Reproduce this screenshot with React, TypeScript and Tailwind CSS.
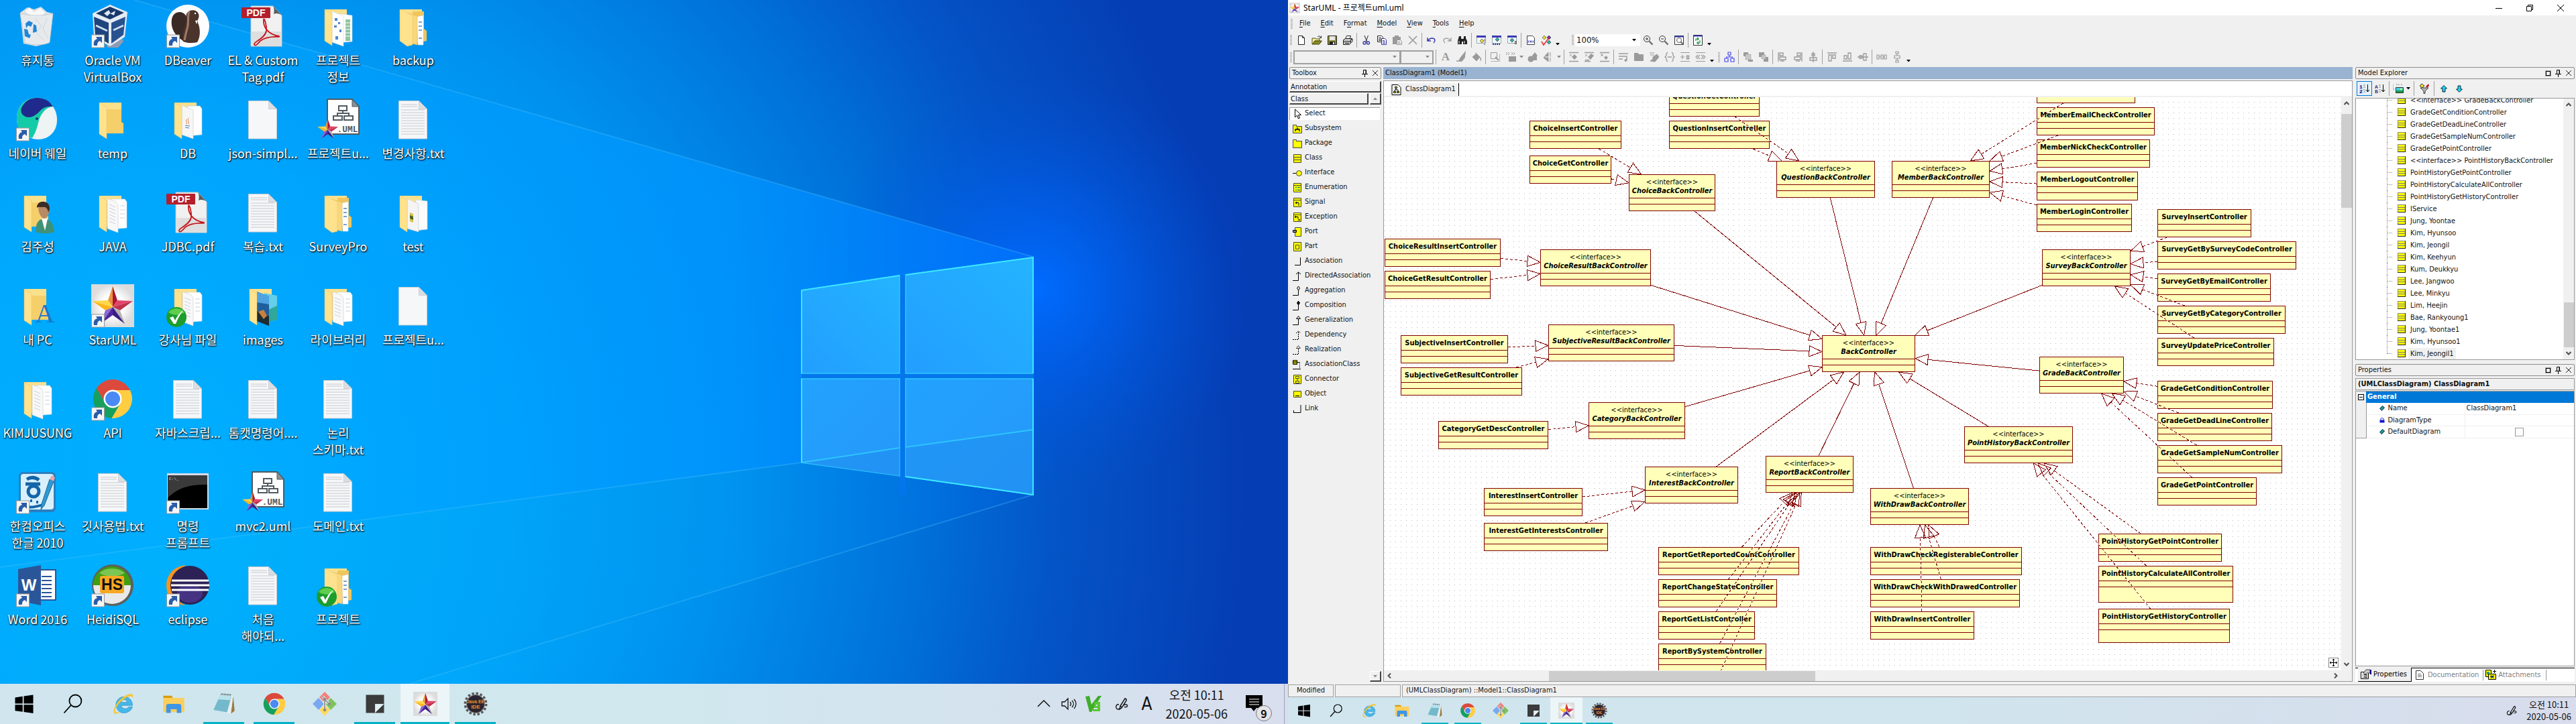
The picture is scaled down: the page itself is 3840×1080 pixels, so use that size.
import React, { ReactNode } from "react";

/* ------------------------------------------------------------------ */
/* Desktop icons (64 x 64)                                            */
/* ------------------------------------------------------------------ */

function Svg64({ children, className = "size-16" }: { children: ReactNode; className?: string }) {
  return (
    <svg viewBox="0 0 64 64" className={`overflow-visible ${className}`} aria-hidden="true">
      {children}
    </svg>
  );
}

function ShortcutMark() {
  return (
    <g>
      <rect x="0.5" y="45" width="19" height="19" fill="#f6f6f6" stroke="#9a9a9a" />
      <path d="M4 61c-1-6 1-9 5-10l-2-3h9v9l-3-3c-3 1-4 3-4 7z" fill="#2b5ca8" />
    </g>
  );
}

function CheckMark() {
  return (
    <g>
      <circle cx="15" cy="49" r="15" fill="#1c9d2c" />
      <path d="M3 42a15 15 0 0 1 24 0c-8 5-16 5-24 0z" fill="#5fce4c" />
      <path d="M5 50l5-2 3 6c3-6 6-11 12-15-5 6-8 13-11 20h-3z" fill="#fff" />
    </g>
  );
}

function StarShape() {
  return (
    <g>
      <path d="M32 3L25 24 32 34z" fill="#e8963c" />
      <path d="M32 3l7 21-7 10z" fill="#b01434" />
      <path d="M62 25L39 24 32 34z" fill="#e24468" />
      <path d="M62 25L43 39 32 34z" fill="#c0304c" />
      <path d="M50 59l-7-20-11-5z" fill="#b4b4b4" />
      <path d="M50 59L32 46V34z" fill="#3c1c82" />
      <path d="M14 59l18-13V34z" fill="#4e2aa0" />
      <path d="M14 59l7-20 11-5z" fill="#8c68d2" />
      <path d="M2 25l19 14 11-5z" fill="#ffb51c" />
      <path d="M2 25l23-1 7 10z" fill="#ffd84a" />
    </g>
  );
}

function StarTile() {
  return (
    <>
      <defs>
        <radialGradient id="starTile">
          <stop offset="0.5" stopColor="#fff" />
          <stop offset="1" stopColor="#dcdcdc" />
        </radialGradient>
      </defs>
      <rect width="64" height="64" fill="url(#starTile)" />
      <StarShape />
    </>
  );
}

function ChromeShape() {
  return (
    <g transform="translate(32 32)">
      <path d="M-24.2-15.9L-11.3 6.5 0-13H25.9A29 29 0 0 0-24.2-15.9z" fill="#dc4a3d" />
      <path d="M25.9-13H0L11.3 6.5-1.7 28.9A29 29 0 0 0 25.9-13z" fill="#ffcd42" />
      <path d="M-1.7 28.9L11.3 6.5H-11.3L-24.2-15.9A29 29 0 0 0-1.7 28.9z" fill="#17a05d" />
      <circle r="13.5" fill="#fff" />
      <circle r="11" fill="#4a8af4" />
    </g>
  );
}

function FolderBack() {
  return (
    <>
      <path d="M12 7h33v29l3 2v15H12z" fill="#f5cf6a" />
      <path d="M12 7h33v10H20z" fill="#fbe08c" />
    </>
  );
}

function FolderFlap({ wide = false }: { wide?: boolean }) {
  return <path d={wide ? "M12 7l19 9v44l-8 2-11-8z" : "M12 7l11 7v47l-11-7z"} fill="#ffe28e" stroke="#e9c15f" strokeWidth="0.5" />;
}

function FolderIcon({ kind = "empty" }: { kind?: "empty" | "docs" | "nested" | "images" | "sheet" | "java" | "jar" }) {
  return (
    <g>
      <FolderBack />
      {kind === "docs" && (
        <>
          <path d="M30 12h20l3 4v39l-23 2z" fill="#fff" stroke="#c5d6e4" strokeWidth="0.6" />
          <path d="M24 11l13 5 3 5v41l-16-6z" fill="#f8f8f8" stroke="#c9c9c9" strokeWidth="0.6" />
          <path d="M27 20l9 4M27 25l9 4M27 30l9 4M27 35l9 4M27 40l9 4M27 45l9 4M43 22h7M43 28h7M43 34h7M43 40h7" stroke="#c3ccd4" strokeWidth="0.9" />
        </>
      )}
      {kind === "java" && (
        <>
          <path d="M32 12h18l3 4v39l-21 2z" fill="#fff" stroke="#9fc6e6" strokeWidth="0.6" />
          <path d="M23 11l17 7v43l-17-6z" fill="#f6f6f6" stroke="#ccc" strokeWidth="0.6" />
          <path d="M30 32c-2 3 2 4 0 7M33 30c-2 4 1 5 0 9" stroke="#e07a3c" fill="none" />
          <path d="M28 41l7 1M28 44l6 1" stroke="#4a76a8" />
        </>
      )}
      {kind === "jar" && (
        <>
          <path d="M36 13l17 2v42l-17 2z" fill="#fbfbfb" stroke="#d0d0d0" strokeWidth="0.6" />
          <path d="M23 11l17 8v42l-17-5z" fill="#f4f4f4" stroke="#c8c8c8" strokeWidth="0.6" />
          <path d="M27 32l5 2v13l-5-2z" fill="#d6c24a" />
          <path d="M27 36l5 2v5l-5-2z" fill="#47662a" />
        </>
      )}
      {kind === "sheet" && (
        <>
          <path d="M31 13l22 3v39l-22 2z" fill="#fff" stroke="#bcd" strokeWidth="0.6" />
          <path d="M43 22h7v32h-7z" fill="#8fc59f" />
          <path d="M43 27h7M43 32h7M43 37h7M43 42h7M43 47h7" stroke="#fff" />
          <path d="M23 10l17 7v45l-17-6z" fill="#fff" stroke="#cdd6df" strokeWidth="0.6" />
          <path d="M27 20h4v4h-4zM32 26h3v3h-3zM26 31h4v3h-4zM34 37h3v4h-3zM28 47h4v5h-4z" fill="#4c86cc" />
        </>
      )}
      {kind === "images" && (
        <>
          <path d="M34 13l19 4v36l-19 4z" fill="#64cfe8" />
          <path d="M36 40l17-8v21l-17 4z" fill="#2fa79a" />
          <path d="M23 11l18 7v44l-18-7z" fill="#1f5f9e" />
          <path d="M23 11l18 7v12l-18-3z" fill="#4fa3e0" />
          <path d="M23 40l18 8v14l-18-7z" fill="#1d2c33" />
          <path d="M25 41l8-3 5 9-5 5z" fill="#c9803c" />
        </>
      )}
      {kind === "nested" && (
        <>
          <path d="M31 10h17v26l4 3v15l-21 4z" fill="#f0c65c" />
          <path d="M37 18l10-2v44h-8z" fill="#fff" stroke="#cdd6df" strokeWidth="0.6" />
          <path d="M40 26h5M40 32h5M40 38h5M40 50h5" stroke="#4c86cc" strokeWidth="1.6" />
          <path d="M23 12l15 5v43l-15-4z" fill="#f9d77c" stroke="#e3bb57" strokeWidth="0.6" />
        </>
      )}
      <FolderFlap wide={kind === "nested"} />
    </g>
  );
}

function PageIcon({ lined = false }: { lined?: boolean }) {
  return (
    <g>
      <path d="M10.500 4.500h30l12 12v44.500h-42z" fill="#f6f7f9" stroke="#c7ccd1" />
      <path d="M40.500 4.500v12h12z" fill="#dadde1" stroke="#bfc4c9" strokeWidth="0.7" />
      {lined && (
        <path d="M14 10h24M14 13h24M14 18h35M14 22h35M14 26h35M14 30h35M14 34h35M14 38h35M14 42h35M14 46h35M14 50h35M14 54h35" stroke="#c6c9cc" strokeWidth="1" />
      )}
    </g>
  );
}

function PdfIcon() {
  return (
    <g>
      <path d="M14 2h33l13 14v46H14z" fill="#f1f1f1" stroke="#c5c5c5" />
      <path d="M14 40h46v22H14z" fill="#dedede" />
      <path d="M47 2l13 14c-3-3-9-4-12-2 1-4 1-9-1-12z" fill="#5c5c5c" />
      <path d="M33 22c-1 10 5 22 23 25 2 3-14-3-28 7-4 5-8 9-9 5s16-8 18-20c1-8-3-20-4-17z" fill="none" stroke="#c4161c" strokeWidth="1.8" />
      <rect y="4" width="43" height="16" rx="1" fill="#b3202c" />
      <text x="21.500" y="17" textAnchor="middle" fontSize="14" fontWeight="700" fill="#fff" fontFamily="Liberation Sans">
        PDF
      </text>
    </g>
  );
}

function UmlIcon() {
  return (
    <g>
      <path d="M16 2h37l10 11v41H16z" fill="#fff" stroke="#505a60" strokeWidth="2" />
      <path d="M53 2v11h10z" fill="#8a9196" stroke="#505a60" strokeWidth="1" />
      <g fill="none" stroke="#505a60" strokeWidth="2">
        <path d="M33 12h12v7H33zM25 27h13v6H25zM41 27h13v6H41zM39 19v4M31 27v-4h17v4" />
      </g>
      <text x="46" y="51" textAnchor="middle" fontSize="13" fontWeight="700" fill="#505a60" fontFamily="Liberation Mono">
        .UML
      </text>
      <g transform="translate(0 30) scale(0.52)">
        <StarShape />
      </g>
    </g>
  );
}

const desktopArt: Record<string, ReactNode> = {
  bin: (
    <g>
      <path d="M6 12l11-8 10 3 10-4 9 8 9 2-5 44-20 5-19-4z" fill="#dfe3e6" />
      <path d="M12 10l8-6 7 6 9-6 8 8-6 6-14 1z" fill="#f8f8f8" stroke="#c2c8cc" strokeWidth="0.7" />
      <path d="M6 13c14 4 34 4 49 0l-5 43c-8 5-28 5-37 1z" fill="#e9edf0" fillOpacity="0.7" stroke="#b7c4cd" strokeWidth="0.8" />
      <path d="M28 20l10 12-8 10 12 12M46 20l-6 16 8 14" stroke="#cfd4d8" fill="none" />
      <path d="M14 28l5-4 6 3-3 6-4-2-3 4zM26 29l4 2 1 9-6 2zM12 36l5 1 2 7 3 1-2 5-7-3z" fill="#1f86d8" />
    </g>
  ),
  vbox: (
    <g>
      <path d="M22 56c8-5 16-4 22-9l4 8-8 9H24z" fill="#8f9bb5" />
      <path d="M28 0l26 11-4 37-22 14L4 49 2 13z" fill="#e6ebf4" />
      <path d="M28 3l21 9-21 10L7 13z" fill="#17396b" />
      <path d="M19 13l7-5 3 5 7-4-2 7-6-3-4 4z" fill="#dfe7f3" />
      <path d="M4 18l22 9v31L6 46z" fill="#1d447c" />
      <path d="M30 27l21-9-3 27-18 13z" fill="#27528e" />
      <path d="M7 31l17 8M33 38l15-7" stroke="#cfdcef" strokeWidth="3" />
      <ShortcutMark />
    </g>
  ),
  dbeaver: (
    <g>
      <circle cx="32" cy="32" r="32" fill="#fdfdfd" />
      <path d="M8 22c2-14 18-14 22-4 2 10-4 20-5 36C12 46 6 34 8 22z" fill="#3a2a25" />
      <path d="M30 14c4-8 16-7 18 0 2 5-2 7-1 13 4 9 4 21-1 29-8 2-16 1-21-1-2-9 0-18 4-25 2-6-1-10 1-16z" fill="#4b342c" />
      <path d="M34 10c-3 8 0 16-3 26-2 6-3 12-4 17" stroke="#a07a68" strokeWidth="3" fill="none" />
      <circle cx="43" cy="13" r="1.200" fill="#fff" />
      <path d="M43 24l4-1-2 6z" fill="#fff" />
      <ShortcutMark />
    </g>
  ),
  pdf: <PdfIcon />,
  folderSheet: <FolderIcon kind="sheet" />,
  folderNested: <FolderIcon kind="nested" />,
  folder: <FolderIcon />,
  folderDocs: <FolderIcon kind="docs" />,
  folderJava: <FolderIcon kind="java" />,
  folderJar: <FolderIcon kind="jar" />,
  folderImages: <FolderIcon kind="images" />,
  folderDocsOk: (
    <g>
      <FolderIcon kind="docs" />
      <CheckMark />
    </g>
  ),
  folderNestedOk: (
    <g>
      <FolderIcon kind="nested" />
      <CheckMark />
    </g>
  ),
  page: <PageIcon />,
  text: <PageIcon lined />,
  uml: <UmlIcon />,
  whale: (
    <g>
      <path d="M31 0c14 0 22 10 24 13 4 6 6 12 6 20 0 18-13 29-28 29S1 50 1 31C1 13 13 0 31 0z" fill="#eef3f3" />
      <path d="M31 0c12 0 19 6 24 13-12 1-19 12-22 24-2 10-6 18-9 23C9 57 1 45 1 31 1 13 13 0 31 0z" fill="#14cba8" />
      <path d="M8 15C13 5 21 0 31 0c12 0 19 5 24 13-8-1-14 1-19 6-6 7-14 12-22 9-5-2-8-7-6-13z" fill="#1f2a8c" />
      <circle cx="31" cy="31" r="2" fill="#163a6e" />
      <ShortcutMark />
    </g>
  ),
  user: (
    <g>
      <FolderIcon />
      <path d="M30 61c-2-12 3-19 12-20 9 1 14 8 15 20-8 3-20 3-27 0z" fill="#3f9277" />
      <path d="M38 41l5 18 4-18z" fill="#fff" />
      <path d="M33 24c0-8 17-9 17 1 0 9-4 16-8 16s-9-8-9-17z" fill="#b98a66" />
      <path d="M31 25c-1-12 20-13 19 2l-2 5c-1-6-3-9-9-8-3 0-6-1-8 1z" fill="#3b2c26" />
    </g>
  ),
  myPc: (
    <g>
      <FolderIcon />
      <text x="43" y="57" textAnchor="middle" fontSize="40" fill="#1878c8" fontFamily="Liberation Serif">
        A
      </text>
    </g>
  ),
  star: (
    <g>
      <StarTile />
      <ShortcutMark />
    </g>
  ),
  chrome: (
    <g>
      <ChromeShape />
      <ShortcutMark />
    </g>
  ),
  hangul: (
    <g>
      <rect x="4" y="2" width="55" height="60" rx="6" fill="#2a7fc0" />
      <rect x="7" y="5" width="49" height="53" rx="4" fill="#d8f0fb" />
      <path d="M16 13c8-5 14-2 18 1M14 20h22" stroke="#1464a8" strokeWidth="5" fill="none" />
      <circle cx="26" cy="31" r="8" fill="none" stroke="#1464a8" strokeWidth="5" />
      <path d="M21 45h3M30 47h3M14 54c10 2 20-1 28-4" stroke="#1464a8" strokeWidth="4" fill="none" />
      <path d="M50 13l6 3-14 36-5 6 1-8z" fill="#2f9ad2" stroke="#17679d" />
      <path d="M50 13l6 3 2-6-5-3z" fill="#e8a6a6" />
      <ShortcutMark />
    </g>
  ),
  cmd: (
    <g>
      <rect x="1" y="4" width="62" height="54" fill="#d5dde6" />
      <rect x="2" y="7" width="59" height="49" fill="#000" />
      <path d="M2 7h59v14C34 20 16 26 2 41z" fill="#3a3a3a" />
      <text x="4" y="14" fontSize="6" fill="#ddd" fontFamily="Liberation Mono">
        C:\_
      </text>
      <ShortcutMark />
    </g>
  ),
  word: (
    <g>
      <rect x="33" y="9" width="26" height="45" fill="#fff" stroke="#2a5699" strokeWidth="2" />
      <path d="M38 19h15M38 25h15M38 31h15M38 37h15M38 43h15M38 49h15" stroke="#2a5699" strokeWidth="2" />
      <path d="M3 8l34-6v60L3 55z" fill="#2a5699" />
      <text x="19" y="40" textAnchor="middle" fontSize="24" fontWeight="700" fill="#fff" fontFamily="Liberation Sans">
        W
      </text>
      <ShortcutMark />
    </g>
  ),
  heidi: (
    <g>
      <circle cx="32" cy="32" r="31" fill="#5d615d" />
      <path d="M3 32a28 28 0 0 1 56 0z" fill="#3f9f10" />
      <path d="M3 32a28 28 0 0 0 56 0z" fill="#e9e9e9" />
      <path d="M12 14a26 22 0 0 1 38 0c-12 6-26 6-38 0z" fill="#7cc653" />
      <rect x="13" y="18" width="36" height="26" rx="3" fill="#f7a823" />
      <text x="31" y="39" textAnchor="middle" fontSize="23" fontWeight="700" fill="#111" fontFamily="Liberation Sans">
        HS
      </text>
      <ShortcutMark />
    </g>
  ),
  eclipse: (
    <g>
      <path d="M30 2C12 3 0 16 0 32s10 28 28 30C17 56 9 46 9 32S17 8 30 2z" fill="#f7941e" />
      <circle cx="35" cy="32" r="29" fill="#2c2255" />
      <ellipse cx="35" cy="44" rx="19" ry="14" fill="#453382" />
      <path d="M8 25h55M7 32h57M8 39h55" stroke="#fff" strokeWidth="3" />
      <ShortcutMark />
    </g>
  ),
};

type DesktopItem = [label: string, art: string];

const desktopItems: DesktopItem[] = [
  ["휴지통", "bin"],
  ["네이버 웨일", "whale"],
  ["김주성", "user"],
  ["내 PC", "myPc"],
  ["KIMJUSUNG", "folderDocs"],
  ["한컴오피스\n한글 2010", "hangul"],
  ["Word 2016", "word"],
  ["Oracle VM\nVirtualBox", "vbox"],
  ["temp", "folder"],
  ["JAVA", "folderDocs"],
  ["StarUML", "star"],
  ["API", "chrome"],
  ["깃사용법.txt", "text"],
  ["HeidiSQL", "heidi"],
  ["DBeaver", "dbeaver"],
  ["DB", "folderJava"],
  ["JDBC.pdf", "pdf"],
  ["강사님 파일", "folderDocsOk"],
  ["자바스크립...", "text"],
  ["명령\n프롬프트", "cmd"],
  ["eclipse", "eclipse"],
  ["EL & Custom\nTag.pdf", "pdf"],
  ["json-simpl...", "page"],
  ["복습.txt", "text"],
  ["images", "folderImages"],
  ["톰캣명령어....", "text"],
  ["mvc2.uml", "uml"],
  ["처음\n해야되...", "text"],
  ["프로젝트\n정보", "folderSheet"],
  ["프로젝트u...", "uml"],
  ["SurveyPro", "folderNested"],
  ["라이브러리", "folderDocs"],
  ["논리\n스키마.txt", "text"],
  ["도메인.txt", "text"],
  ["프로젝트", "folderNestedOk"],
  ["backup", "folderNested"],
  ["변경사항.txt", "text"],
  ["test", "folderJar"],
  ["프로젝트u...", "page"],
];

/* ------------------------------------------------------------------ */
/* Wallpaper                                                          */
/* ------------------------------------------------------------------ */

function Wallpaper() {
  return (
    <svg viewBox="0 0 1920 1020" preserveAspectRatio="none" className="absolute inset-0 size-full" aria-hidden="true">
      <defs>
        <radialGradient id="sky" gradientUnits="userSpaceOnUse" cx="300" cy="720" r="1560">
          <stop offset="0" stopColor="#00b6ff" />
          <stop offset="0.3" stopColor="#00a8fb" />
          <stop offset="0.5" stopColor="#0090ee" />
          <stop offset="0.68" stopColor="#0072da" />
          <stop offset="0.82" stopColor="#0454c6" />
          <stop offset="1" stopColor="#053db4" />
        </radialGradient>
        <linearGradient id="beam" gradientUnits="userSpaceOnUse" x1="0" y1="0" x2="1540" y2="0">
          <stop offset="0" stopColor="#00a8ff" stopOpacity="0.3" />
          <stop offset="0.7" stopColor="#0096ff" stopOpacity="0.75" />
          <stop offset="1" stopColor="#0070fa" stopOpacity="0.9" />
        </linearGradient>
        <linearGradient id="lowBeam" gradientUnits="userSpaceOnUse" x1="0" y1="0" x2="1540" y2="0">
          <stop offset="0" stopColor="#00b0ff" stopOpacity="0.2" />
          <stop offset="0.7" stopColor="#0098f0" stopOpacity="0.6" />
          <stop offset="1" stopColor="#005fdc" stopOpacity="0.5" />
        </linearGradient>
        <radialGradient id="glow" gradientUnits="userSpaceOnUse" cx="1545" cy="430" r="320">
          <stop offset="0" stopColor="#006cff" />
          <stop offset="0.4" stopColor="#0062f4" stopOpacity="0.6" />
          <stop offset="1" stopColor="#0050d8" stopOpacity="0" />
        </radialGradient>
        <linearGradient id="pane" x1="0" y1="1" x2="1" y2="0">
          <stop offset="0" stopColor="#229eff" />
          <stop offset="1" stopColor="#24b4ff" />
        </linearGradient>
        <linearGradient id="paneLow" x1="0" y1="0" x2="1" y2="1">
          <stop offset="0" stopColor="#22a2ff" />
          <stop offset="1" stopColor="#2698f8" />
        </linearGradient>
      </defs>
      <rect width="1920" height="1020" fill="url(#sky)" />
      <circle cx="1545" cy="430" r="320" fill="url(#glow)" />
      <path d="M0 846L1195 690 1540 738 610 1020H0z" fill="url(#lowBeam)" />
      <path d="M0 0H200L1540 383V738L1195 690 0 846z" fill="url(#beam)" />
      <g fill="none" stroke="#4cc4ff" strokeOpacity="0.3" strokeWidth="2">
        <path d="M200 0L1540 383M0 846L1195 690M610 1020L1540 738" />
      </g>
      <path d="M1341 411h9v327h-9zM1195 557h346v8h-346z" fill="#0476ec" />
      <path d="M1195 433L1341 411V557H1195z" fill="url(#pane)" stroke="#2fc8ff" strokeWidth="1.5" />
      <path d="M1350 410L1540 384V557H1350z" fill="url(#pane)" stroke="#2fc8ff" strokeWidth="1.5" />
      <path d="M1195 565H1341V710L1195 690z" fill="url(#paneLow)" stroke="#2fc8ff" strokeWidth="1.5" />
      <path d="M1350 565H1540V738L1350 711z" fill="url(#paneLow)" stroke="#2fc8ff" strokeWidth="1.5" />
      <path d="M1195 690l146-22v42zM1350 667l190-26v97l-190-27z" fill="#2090f0" fillOpacity="0.6" />
      <path d="M1195 690l146-22M1350 667l190-26" stroke="#2fc4ff" strokeWidth="2" />
      <path d="M1195 557V433L1341 411M1195 565V690M1350 410L1540 384V557M1540 565V738L1350 711" fill="none" stroke="#3ce6ff" strokeWidth="2" />
    </svg>
  );
}

/* ------------------------------------------------------------------ */
/* Taskbar icons (32 x 32)                                            */
/* ------------------------------------------------------------------ */

const taskArt: Record<string, ReactNode> = {
  start: <path d="M4 7.500l10-1.500v9.500H4zM15.500 5.800L28 4v11.500H15.500zM4 17h10v9.500L4 25zM15.500 17H28v11.500l-12.500-1.800z" fill="#000" />,
  search: (
    <g fill="none" stroke="#000" strokeWidth="1.600">
      <circle cx="19" cy="12" r="8" />
      <path d="M13 18L4 28" />
    </g>
  ),
  ie: (
    <g>
      <path d="M6 17a11 11 0 1 1 22 1H13c1 5 8 6 10 2h5c-3 9-16 11-20 3-1-2-2-4-2-6zm7-3h8c-1-5-7-5-8 0z" fill="#45b8ea" stroke="#2a88c4" strokeWidth="0.600" />
      <path d="M5 29c-6-3 4-20 16-25 7-3 9 0 7 4 0-3-4-3-9 0C11 13 2 24 6 27c1 1 4 0 6-1-2 2-5 4-7 3z" fill="#f8c530" />
    </g>
  ),
  explorer: (
    <g>
      <path d="M2 5h11l2 3H2z" fill="#d99a0b" />
      <path d="M2 8h28v19H2z" fill="#fbcf5d" />
      <path d="M6 28v-9c0-2 1-3 3-3h14c2 0 3 1 3 3v9h-6v-5h-8v5z" fill="#3f96e6" />
    </g>
  ),
  notepad: (
    <g>
      <path d="M28 5l2 20-5 4z" fill="#9b7a3d" />
      <path d="M12 4l16 1-3 24-6-1z" fill="#e9edef" />
      <path d="M11 4l15 1-6 22L2 24z" fill="#73b9cb" />
      <path d="M11 4l15 1-2 6-16-1z" fill="#b9e2ea" />
      <path d="M12 3l14 1" stroke="#555" strokeWidth="2" strokeDasharray="1 1" />
    </g>
  ),
  chrome: (
    <g transform="scale(0.500)">
      <ChromeShape />
    </g>
  ),
  git: (
    <g>
      <path d="M16 0l7 7-7 8-7-8z" fill="#f37f7b" />
      <path d="M24 8l8 8-8 8-7-8z" fill="#7fc35c" />
      <path d="M8 8l7 8-7 8-8-8z" fill="#79a8f0" />
      <path d="M16 17l7 7-7 8-7-8z" fill="#ffd95c" />
      <path d="M13 6l3 3v15M16 10l6 6" stroke="#e9eef0" strokeWidth="3.500" fill="none" />
      <path d="M13 6l3 3v15M16 10l6 6" stroke="#8b8b8b" strokeWidth="1.500" fill="none" />
      <circle cx="16" cy="24" r="2" fill="#8b8b8b" />
      <circle cx="22" cy="16" r="2" fill="#8b8b8b" />
      <circle cx="16" cy="10" r="2" fill="#8b8b8b" />
    </g>
  ),
  sticky: (
    <g>
      <path d="M4 4h24v12H16v12H4z" fill="#3b3b3b" />
      <path d="M17 27V17h10z" fill="#e4f0f4" />
      <path d="M28 16v12H16z" fill="#3b3b3b" />
    </g>
  ),
  star: (
    <g transform="scale(0.500)">
      <StarTile />
    </g>
  ),
  javaee: (
    <g>
      <circle cx="16" cy="16" r="13.500" fill="none" stroke="#5a5a5a" strokeWidth="4" strokeDasharray="3 2.300" />
      <circle cx="16" cy="16" r="12" fill="#2b2430" />
      <circle cx="16" cy="16" r="12" fill="none" stroke="#8d8d8d" />
      <text x="16" y="15" textAnchor="middle" fontSize="6" fontWeight="700" fill="#f0902c" fontFamily="Liberation Sans">
        Java EE
      </text>
      <text x="16" y="22" textAnchor="middle" fontSize="7" fontWeight="700" fill="#f0902c" fontFamily="Liberation Sans">
        IDE
      </text>
    </g>
  ),
};

const taskNames: Record<string, string> = {
  start: "Start",
  search: "Search",
  ie: "Internet Explorer",
  explorer: "File Explorer",
  notepad: "Notepad",
  chrome: "Chrome",
  git: "Git",
  sticky: "Sticky Notes",
  star: "StarUML",
  javaee: "Java EE IDE",
};

const runningTasks = ["notepad", "chrome", "sticky", "star", "javaee"];
const pinned = ["ie", "explorer", "notepad", "chrome", "git", "sticky", "star", "javaee"];

function TaskButton({ id, large, className }: { id: string; large: boolean; className: string }) {
  const active = id === "star";
  const underline = active ? "w-full" : large ? "w-[61px]" : "w-10";
  return (
    <button
      type="button"
      aria-label={taskNames[id]}
      className={`relative flex h-full items-center justify-center ${className} ${active ? "bg-white/60" : ""}`}
    >
      <svg viewBox="0 0 32 32" className={large ? "size-9" : "size-6"}>
        {taskArt[id]}
      </svg>
      {runningTasks.includes(id) && (
        <span className={`absolute bottom-0 bg-[#00b2c4] ${underline} ${large ? "h-[3px]" : "h-0.5"}`} />
      )}
    </button>
  );
}

function PenIcon({ className }: { className: string }) {
  return (
    <svg viewBox="0 0 20 20" className={className} aria-hidden="true" fill="none" stroke="#111" strokeWidth="1.400">
      <path d="M7 18l1-5 7-11 2 1 0 2-7 11zM8 13l2 2" />
      <path d="M6 11c-4-1-5 3-4 5 1 3 4 2 5 1M13 12c3-3 7 0 5 2-1 1-3 1-4 0" />
    </svg>
  );
}

function Desktop() {
  return (
    <section className="flex h-full flex-1 flex-col overflow-hidden font-['Noto_Sans_CJK_KR',sans-serif]">
      <div className="relative flex-1 overflow-hidden">
        <Wallpaper />
        <ul className="relative grid w-max auto-cols-[112px] grid-flow-col grid-rows-[repeat(7,139px)]">
          {desktopItems.map(([label, art], i) => (
            <li key={i} className="flex flex-col items-center pt-[7px]">
              <Svg64>{desktopArt[art]}</Svg64>
              <span className="mt-1.5 whitespace-pre text-center text-[18px] leading-[25px] text-white [text-shadow:1px_1px_2px_#000,0_1px_2px_rgba(0,0,0,0.7)]">
                {label}
              </span>
            </li>
          ))}
        </ul>
      </div>
      <footer className="flex h-[60px] shrink-0 items-stretch bg-linear-to-r from-[#d0e5ee] via-[#d0e8ee] to-[#d8deee] text-[#111]">
        <TaskButton id="start" large className="w-[72px]" />
        <TaskButton id="search" large className="mr-0.5 w-[73px]" />
        {pinned.map((id) => (
          <TaskButton key={id} id={id} large className="mr-0.5 w-[73px]" />
        ))}
        <div className="ml-auto flex items-center pr-[5px]">
          <svg viewBox="0 0 20 20" className="mr-4 size-5" fill="none" stroke="#111" strokeWidth="1.500" aria-hidden="true">
            <path d="M1 14l9-9 9 9" />
          </svg>
          <svg viewBox="0 0 24 24" className="mr-3 size-6" fill="none" stroke="#111" strokeWidth="1.300" aria-hidden="true">
            <path d="M1 9h4l5-5v16l-5-5H1zM13 9c2 2 2 4 0 6M16 7c3 3 3 7 0 10M19 5c4 4 4 10 0 14" />
          </svg>
          <svg viewBox="0 0 24 24" className="mr-5 size-6" aria-hidden="true">
            <path d="M0 1l6-1 3 13L19 0h5L9 24H6z" fill="#3fae2a" />
            <path d="M14 9h8v14H11v-3h7v-2h-5v-3h5v-2h-5z" fill="#5cc832" />
          </svg>
          <PenIcon className="mr-5 size-5" />
          <span className="mr-5 text-[26px] leading-none font-['DejaVu_Sans_Condensed',sans-serif]">A</span>
          <time className="mr-[26px] text-center text-[18px] leading-7">
            오전 10:11
            <br />
            2020-05-06
          </time>
          <span className="relative mr-[30px] flex">
            <svg viewBox="0 0 28 28" className="size-7" aria-hidden="true">
              <path d="M1 1h25v19h-9l-4 5-4-5H1z" fill="#000" />
              <path d="M6 7h15M6 11h15M6 15h15" stroke="#fff" strokeWidth="1.200" />
            </svg>
            <span className="absolute -right-3 -bottom-3 flex size-6 items-center justify-center rounded-full border border-[#777] bg-[#e4e4e8] text-[16px] font-bold leading-none">
              9
            </span>
          </span>
          <span className="h-[60px] w-px bg-[#9aa6b5]" />
        </div>
      </footer>
    </section>
  );
}

/* ------------------------------------------------------------------ */
/* Class diagram                                                      */
/* ------------------------------------------------------------------ */

interface UmlNode {
  name: string;
  x: number;
  y: number;
  w: number;
  h?: number;
  abstract?: boolean;
}

const nodes: UmlNode[] = [
  { name: "QuestionGetController", x: 425, y: -13, w: 135 },
  { name: "QuestionInsertController", x: 425, y: 35, w: 150 },
  { name: "ChoiceInsertController", x: 217, y: 35, w: 137 },
  { name: "ChoiceGetController", x: 217, y: 87, w: 122 },
  { name: "ChoiceResultInsertController", x: 1, y: 211, w: 173 },
  { name: "ChoiceGetResultController", x: 1, y: 259, w: 158 },
  { name: "SubjectiveInsertController", x: 25, y: 355, w: 160 },
  { name: "SubjectiveGetResultController", x: 25, y: 403, w: 181 },
  { name: "CategoryGetDescController", x: 81, y: 483, w: 164 },
  { name: "InterestInsertController", x: 149, y: 583, w: 147 },
  { name: "InterestGetInterestsController", x: 149, y: 635, w: 185 },
  { name: "ReportGetReportedCountController", x: 409, y: 671, w: 210 },
  { name: "ReportChangeStateController", x: 409, y: 719, w: 177 },
  { name: "ReportGetListController", x: 409, y: 767, w: 144 },
  { name: "ReportBySystemController", x: 409, y: 815, w: 161 },
  { name: "ReportInsertController", x: 409, y: 863, w: 161 },
  { name: "WithDrawCheckRegisterableController", x: 725, y: 671, w: 226 },
  { name: "WithDrawCheckWithDrawedController", x: 725, y: 719, w: 223 },
  { name: "WithDrawInsertController", x: 725, y: 767, w: 155 },
  { name: "PointHistoryGetPointController", x: 1065, y: 651, w: 184 },
  { name: "PointHistoryCalculateAllController", x: 1065, y: 699, w: 201, h: 55 },
  { name: "PointHistoryGetHistoryController", x: 1065, y: 763, w: 196, h: 51 },
  { name: "GradeGetConditionController", x: 1153, y: 423, w: 172 },
  { name: "GradeGetDeadLineController", x: 1153, y: 471, w: 171 },
  { name: "GradeGetSampleNumController", x: 1153, y: 519, w: 186 },
  { name: "GradeGetPointController", x: 1153, y: 567, w: 148 },
  { name: "SurveyInsertController", x: 1153, y: 167, w: 140 },
  { name: "SurveyGetBySurveyCodeController", x: 1153, y: 215, w: 207 },
  { name: "SurveyGetByEmailController", x: 1153, y: 263, w: 169 },
  { name: "SurveyGetByCategoryController", x: 1153, y: 311, w: 191 },
  { name: "SurveyUpdatePriceController", x: 1153, y: 359, w: 174 },
  { name: "MemberInsertController", x: 973, y: -33, w: 147 },
  { name: "MemberEmailCheckController", x: 973, y: 15, w: 176 },
  { name: "MemberNickCheckController", x: 973, y: 63, w: 169 },
  { name: "MemberLogoutController", x: 973, y: 111, w: 151, h: 43 },
  { name: "MemberLoginController", x: 973, y: 159, w: 142 },
  { name: "ChoiceBackController", x: 365, y: 115, w: 129, abstract: true },
  { name: "ChoiceResultBackController", x: 233, y: 227, w: 165, abstract: true },
  { name: "SubjectiveResultBackController", x: 245, y: 339, w: 188, abstract: true },
  { name: "CategoryBackController", x: 305, y: 455, w: 144, abstract: true },
  { name: "InterestBackController", x: 389, y: 551, w: 139, abstract: true },
  { name: "ReportBackController", x: 569, y: 535, w: 131, abstract: true },
  { name: "WithDrawBackController", x: 725, y: 583, w: 147, abstract: true },
  { name: "PointHistoryBackController", x: 865, y: 491, w: 162, abstract: true },
  { name: "GradeBackController", x: 977, y: 387, w: 126, abstract: true },
  { name: "SurveyBackController", x: 981, y: 227, w: 132, abstract: true },
  { name: "MemberBackController", x: 757, y: 95, w: 146, abstract: true },
  { name: "QuestionBackController", x: 585, y: 95, w: 147, abstract: true },
  { name: "BackController", x: 653, y: 355, w: 139, abstract: true },
];

const families = [
  "ChoiceResult",
  "Choice",
  "Subjective",
  "Category",
  "Interest",
  "Report",
  "WithDraw",
  "PointHistory",
  "Grade",
  "Survey",
  "Member",
  "Question",
];

const byName = new Map(nodes.map((n) => [n.name, n]));

function parentOf(node: UmlNode): UmlNode | undefined {
  if (node.name === "BackController") return undefined;
  if (node.abstract) return byName.get("BackController");
  if (node.name === "ChoiceGetResultController") return byName.get("ChoiceResultBackController");
  const family = families.find((f) => node.name.startsWith(f));
  return byName.get(family === "Subjective" ? "SubjectiveResultBackController" : `${family}BackController`);
}

const heightOf = (n: UmlNode) => n.h ?? (n.abstract ? 55 : 42);
const centreOf = (n: UmlNode) => ({ x: n.x + n.w / 2, y: n.y + heightOf(n) / 2 });

/** Point where the ray from the node's centre towards (tx, ty) leaves the node. */
function exitPoint(n: UmlNode, tx: number, ty: number) {
  const c = centreOf(n);
  const dx = tx - c.x;
  const dy = ty - c.y;
  const s = Math.min(n.w / 2 / Math.max(Math.abs(dx), 0.001), heightOf(n) / 2 / Math.max(Math.abs(dy), 0.001));
  return { x: c.x + dx * s, y: c.y + dy * s };
}

function Connector({ from, to }: { from: UmlNode; to: UmlNode }) {
  const a = centreOf(from);
  const b = centreOf(to);
  const start = exitPoint(from, b.x, b.y);
  const tip = exitPoint(to, a.x, a.y);
  const len = Math.hypot(tip.x - start.x, tip.y - start.y);
  const ux = (tip.x - start.x) / len;
  const uy = (tip.y - start.y) / len;
  const bx = tip.x - ux * 19;
  const by = tip.y - uy * 19;
  const line = `M${start.x} ${start.y}L${bx} ${by}`;
  const head = `M${tip.x} ${tip.y}L${bx - uy * 8} ${by + ux * 8}L${bx + uy * 8} ${by - ux * 8}z`;
  return (
    <g fill="none" stroke="#800000">
      {!from.abstract && <path d={line} stroke="#fff" />}
      <path d={line} strokeDasharray={from.abstract ? undefined : "4 3"} />
      <path d={head} />
    </g>
  );
}

function ClassBox({ node }: { node: UmlNode }) {
  return (
    <div
      className="absolute flex flex-col border border-[#800000] bg-[#ffffb9] text-black"
      style={{ left: node.x, top: node.y, width: node.w, height: heightOf(node) }}
    >
      <div className={`flex shrink-0 flex-col items-center justify-center whitespace-nowrap leading-[13px] ${node.abstract ? "h-[34px]" : "h-[21px]"}`}>
        {node.abstract && <span>&lt;&lt;interface&gt;&gt;</span>}
        <span className={node.abstract ? "font-bold italic" : "font-bold"}>{node.name}</span>
      </div>
      <div className="h-[9px] shrink-0 border-t border-[#800000]" />
      <div className="flex-1 border-t border-[#800000]" />
    </div>
  );
}

function DiagramCanvas() {
  return (
    <div className="relative flex-1 overflow-hidden bg-white">
      <svg className="absolute inset-0 size-full" aria-hidden="true">
        <defs>
          <pattern id="grid" width="8" height="8" patternUnits="userSpaceOnUse">
            <rect x="1" y="7" width="1" height="1" fill="#b8b8b8" />
          </pattern>
        </defs>
        <rect width="100%" height="100%" fill="url(#grid)" />
      </svg>
      {nodes.map((n) => (
        <ClassBox key={n.name} node={n} />
      ))}
      <svg className="absolute inset-0 size-full" shapeRendering="crispEdges" aria-hidden="true">
        {nodes.map((n) => {
          const parent = parentOf(n);
          return parent ? <Connector key={n.name} from={n} to={parent} /> : null;
        })}
      </svg>
      <button type="button" aria-label="Navigate" className="absolute right-1 bottom-1 flex size-[15px] items-center justify-center border border-[#888] bg-white">
        <svg viewBox="0 0 11 11" className="size-[11px]" fill="none" stroke="#000">
          <path d="M5.500 0v11M0 5.500h11M4 2l1.500-2L7 2M4 9l1.500 2L7 9M2 4L0 5.500 2 7M9 4l2 1.500L9 7" />
        </svg>
      </button>
    </div>
  );
}

/* ------------------------------------------------------------------ */
/* StarUML chrome                                                     */
/* ------------------------------------------------------------------ */

const G = "#9a9a9a";

function gem(x: number, y: number, fill: string) {
  return <path d={`M${x} ${y}l3-3 3 3-3 3z`} fill={fill} stroke="#333" strokeWidth="0.600" />;
}

function windowGlyph(extra: ReactNode) {
  return (
    <g>
      <path d="M1.500 1.500h13v11h-13z" fill="#f4f8ff" stroke="#9aa" />
      <path d="M1 1h14v3H1z" fill="#3b3bb0" />
      {extra}
    </g>
  );
}

const toolArt: Record<string, ReactNode> = {
  new: <path d="M3.500 1.500h6l3 3v10h-9zM9.500 1.500v3h3" fill="#fff" stroke="#222" />,
  open: (
    <g>
      <path d="M1 5h5l1 1h5v3H5l-3 5H1z" fill="#f2ee9a" stroke="#55531a" />
      <path d="M5 9h10.500l-4 5H1.500z" fill="#8d8b22" stroke="#44430f" />
      <path d="M9 3c2-2 4-1 5 1M14.500 1.500v3h-3" fill="none" stroke="#222" />
    </g>
  ),
  save: (
    <g>
      <path d="M1.500 1.500h13v13h-13z" fill="#8c8c3a" stroke="#222" />
      <path d="M4 2h8v6H4z" fill="#e8e8e0" />
      <path d="M4 10h8v5H4z" fill="#222" />
      <path d="M9 11h2v3H9z" fill="#eee" />
    </g>
  ),
  print: (
    <g stroke="#222">
      <path d="M4.500 6l2-4.500h6L11 6z" fill="#fff" />
      <path d="M1.500 7.500l3-2h10l-2 3v4l-2 2h-9z" fill="#c8c8c8" />
      <path d="M1.500 10h11M4 12.500h6M12 8l3-2v4l-3 2" fill="none" />
    </g>
  ),
  cut: (
    <g fill="none">
      <path d="M5 1l3.500 9M10.500 1L7 10" stroke="#222" />
      <circle cx="5" cy="12" r="2" stroke="#3434a8" strokeWidth="1.300" />
      <circle cx="10.500" cy="12" r="2" stroke="#3434a8" strokeWidth="1.300" />
    </g>
  ),
  copy: (
    <g>
      <path d="M1.500 1.500h6l2 2v7h-8z" fill="#fff" stroke="#222" />
      <path d="M3 4.500h4M3 6.500h5M3 8.500h4" stroke="#222" />
      <path d="M7.500 5.500h5l2 2v7h-7z" fill="#fff" stroke="#3434a8" />
      <path d="M9 8.500h3M9 10.500h4M9 12.500h4" stroke="#3434a8" />
    </g>
  ),
  paste: (
    <g>
      <path d="M1 3h12v11H1z" fill={G} />
      <path d="M4 1h6v3H4z" fill={G} />
      <path d="M7.500 7.500h5l2 2v5h-7z" fill="#eee" stroke={G} />
      <path d="M9 10.500h3M9 12.500h4" stroke={G} />
    </g>
  ),
  delete: <path d="M2 2l12 12M14 2L2 14" stroke={G} strokeWidth="1.600" />,
  undo: <path d="M2 4v5h5M2.500 8.500C6 4 12 4 13 8c0 2-1 3-2 4" fill="none" stroke="#3434a8" strokeWidth="1.400" />,
  redo: <path d="M14 4v5H9M13.500 8.500C10 4 4 4 3 8c0 2 1 3 2 4" fill="none" stroke={G} strokeWidth="1.300" />,
  find: (
    <g fill="#222">
      <path d="M3 2h3v3l1 2v7H1V9zM10 2h3v3l2 4v5H9V7l1-2z" />
      <path d="M6 6h4v4H6z" />
      <path d="M3 9v4M11 9v4" stroke="#fff" />
    </g>
  ),
  win1: windowGlyph(
    <g>
      {gem(6, 9, "#e8d82c")}
      <path d="M13 6v9" stroke="#777" strokeWidth="2" strokeDasharray="1 1" />
    </g>,
  ),
  win2: windowGlyph(
    <g>
      {gem(6, 7, "#2cb0a8")}
      <path d="M2 14h12" stroke="#3434a8" strokeWidth="2" strokeDasharray="2 1" />
    </g>,
  ),
  win3: windowGlyph(
    <g>
      {gem(5, 8, "#2cb0a8")}
      <path d="M12.500 9.500h2v4h-2z" fill="#e8d82c" stroke="#555" />
    </g>,
  ),
  code: (
    <g>
      <path d="M2.500 1.500h8l3 3v10h-11z" fill="#fff" stroke="#444" />
      <path d="M3 8h10v4H3z" fill="#c8ccf0" />
      <path d="M5 9l-1 1 1 1M11 9l1 1-1 1M7 9l2 2M9 9l-2 2" stroke="#3434a8" fill="none" strokeWidth="0.800" />
    </g>
  ),
  verify: (
    <g>
      {gem(2, 4, "#e8d82c")}
      {gem(9, 4, "#3434c0")}
      {gem(9, 11, "#2cb0a8")}
      <path d="M1 10l3 5L13 3" fill="none" stroke="#e83030" strokeWidth="1.600" />
    </g>
  ),
  zoomIn: (
    <g fill="none" stroke="#333">
      <circle cx="6" cy="6" r="4.500" />
      <path d="M4 6h4M6 4v4" />
      <path d="M9.500 9.500l5 5" strokeWidth="2.200" stroke="#666" />
    </g>
  ),
  zoomOut: (
    <g fill="none" stroke="#333">
      <circle cx="6" cy="6" r="4.500" />
      <path d="M4 6h4" />
      <path d="M9.500 9.500l5 5" strokeWidth="2.200" stroke="#666" />
    </g>
  ),
  fit: (
    <g fill="none">
      <path d="M1.500 1.500h13v13h-13z" stroke="#333" fill="#fff" />
      <path d="M1 2.500h14" stroke="#3434a8" strokeWidth="2" />
      <circle cx="8" cy="8" r="3.500" stroke="#555" />
      <path d="M10.500 10.500l4 4" stroke="#666" strokeWidth="2" />
    </g>
  ),
  refresh: (
    <g fill="none">
      <path d="M1.500 0.500h13v15h-13z" stroke="#333" fill="#fff" />
      <path d="M1 1.500h14" stroke="#3434a8" strokeWidth="2" />
      <path d="M5 9V6h4l-2-2M9 6L7 8M11 8v4H7l2-2M7 12l2 2" stroke="#149040" strokeWidth="1.200" />
    </g>
  ),
  fontA: (
    <text x="8" y="13" textAnchor="middle" fontSize="17" fontWeight="700" fill={G} fontFamily="Liberation Serif">
      A
    </text>
  ),
  brush: <path d="M14 1l-1 8-4 5H5l2-4zM1 14h4" stroke={G} fill={G} strokeWidth="1.500" />,
  fill: <path d="M7 1v5M2 8l6-5 5 5-5 6zM13 8c2 2 2 4 1 6" fill={G} stroke={G} />,
  select: (
    <g fill="none" stroke={G}>
      <path d="M1.500 1.500h9v9h-9z" />
      <path d="M2 14.500h12.500V3" strokeDasharray="2 1" />
      <path d="M8 8l5 5" strokeWidth="2" />
    </g>
  ),
  stereotype: (
    <g fill={G}>
      <path d="M5 7h11v8H5z" />
      <path d="M1 1l2 2-2 2M4 1l2 2-2 2M9 1l2 2-2 2M12 1l2 2-2 2" fill="none" stroke={G} />
    </g>
  ),
  shapes: (
    <g fill={G}>
      <circle cx="5" cy="11" r="4.500" />
      <path d="M7 6l4-5 4 5h-1v7H8z" />
    </g>
  ),
  mirror: (
    <g fill={G} stroke={G}>
      <path d="M8 1L1 9l7 6zM11 1v14" />
      <path d="M3 8h9" stroke="#fff" />
    </g>
  ),
  box1: (
    <g>
      <path d="M1 1.500h14M1 14.500h14" stroke={G} strokeWidth="1.500" />
      <path d="M5 8l4-4 4 4-4 4z" fill={G} />
      <path d="M2 4l3 3M5 4L2 7" stroke={G} />
    </g>
  ),
  box2: (
    <g>
      <path d="M1 1.500h14M2 12.500h6M1 14.500h9" stroke={G} strokeWidth="1.500" />
      <path d="M6 8l5-5 4 3-5 6z" fill={G} />
      <path d="M2 4l3 3M5 4L2 7" stroke={G} />
    </g>
  ),
  box3: (
    <g>
      <path d="M1 1.500h14M1 14.500h14" stroke={G} strokeWidth="1.500" />
      <path d="M7 9l3-3 3 3-3 3z" fill={G} />
      <path d="M2 3l4 4M6 3L2 7" stroke={G} />
    </g>
  ),
  wrap: <path d="M1 3h14M1 7h12v6h-3M12 11l-2 2 2 2M1 11h6" fill="none" stroke={G} strokeWidth="1.400" />,
  folder: <path d="M1 2h6l1 2h7v10H1z" fill={G} />,
  hand: <path d="M1 2h7M2 5h6M6 8l6-4 3 4-6 7-7-1 4-3z" fill={G} stroke={G} />,
  braces: (
    <g fill="none" stroke={G} strokeWidth="1.300">
      <path d="M5 1L3 3v3L1 8l2 2v3l2 2M11 1l2 2v3l2 2-2 2v3l-2 2M5 8h6" />
    </g>
  ),
  plusHash: (
    <g fill="none" stroke={G} strokeWidth="1.200">
      <path d="M1 1.500h14M1 14.500h14M4 5v6M1 8h6M9 7h6M9 10h6M11 5v7M13 5v7" />
    </g>
  ),
  guillemets: (
    <g fill="none" stroke={G} strokeWidth="1.200">
      <path d="M1 1.500h14M1 14.500h14M4 5L1 8l3 3M7 5L4 8l3 3M9 5l3 3-3 3M12 5l3 3-3 3" />
    </g>
  ),
  layout: (
    <g fill="none" stroke="#4a4af0" strokeWidth="1.200">
      <path d="M6 1h4v4H6zM1 10h5v5H1zM10 10h5v5h-5zM8 5v3M3.500 10V8h9v2" />
    </g>
  ),
  front: (
    <g fill={G}>
      <path d="M1 1h7v3h3v8h4v3H8v-4H5V7H1z" />
      <path d="M4 4h8v8H4z" fill="#c8c8c8" stroke={G} strokeDasharray="1 1" />
    </g>
  ),
  back: (
    <g fill={G}>
      <path d="M1 1h8v7H1zM8 8h7v7H8z" />
      <path d="M5 5h6v6H5z" fill="#c8c8c8" stroke={G} strokeDasharray="1 1" />
    </g>
  ),
  alignL: <path d="M2 1v14M4 2h5v4H4zM4 8h9v4H4zM5 14h6" fill="none" stroke={G} strokeWidth="1.300" />,
  alignR: <path d="M14 1v14M12 2H7v4h5zM12 8H3v4h9zM5 14h6" fill="none" stroke={G} strokeWidth="1.300" />,
  alignC: <path d="M8 0v16M6 3h4v3H6zM3 9h10v4H3z" fill="none" stroke={G} strokeWidth="1.300" />,
  alignT: <path d="M1 2h14M3 5h4v9H3zM9 5h4v5H9z" fill="none" stroke={G} strokeWidth="1.300" />,
  alignB: <path d="M1 14h14M3 11V6h4v5zM9 11V2h4v9z" fill="none" stroke={G} strokeWidth="1.300" />,
  alignM: <path d="M0 8h16M3 6h4v4H3zM9 3h4v10H9z" fill="none" stroke={G} strokeWidth="1.300" />,
  spaceH: <path d="M1 5h3v6H1zM7 5h3v6H7zM12 5h3v6h-3zM4 8h3M10 8h2" fill="none" stroke={G} strokeWidth="1.200" />,
  spaceV: <path d="M6 0h4v3H6zM4 6h8v4H4zM6 13h4v3H6zM8 3v3M8 10v3" fill="none" stroke={G} strokeWidth="1.200" />,
};

function Tool({ id }: { id: string }) {
  return (
    <button type="button" aria-label={id} className="flex h-[23px] w-[23px] shrink-0 items-center justify-center">
      <svg viewBox="0 0 16 16" className="size-4 overflow-visible">
        {toolArt[id]}
      </svg>
    </button>
  );
}

function Sep() {
  return <span className="mx-0.5 h-[22px] w-px shrink-0 bg-[#a0a0a0]" />;
}

function Grip() {
  return (
    <span className="mr-0.5 ml-[3px] h-[15px] w-[3px] shrink-0 bg-[repeating-linear-gradient(#a8a8a8_0_1px,#f0f0f0_1px_2px)]" />
  );
}

function Caret({ muted = false }: { muted?: boolean }) {
  return (
    <svg viewBox="0 0 6 4" className="h-1 w-1.5 shrink-0" aria-hidden="true">
      <path d="M0 0h6L3 3.500z" fill={muted ? "#8a8a8a" : "#000"} />
    </svg>
  );
}

function Tools({ ids }: { ids: string }) {
  return (
    <>
      {ids.split(" ").map((id, i) => {
        if (id === "|") return <Sep key={i} />;
        if (id === "v") return <span key={i} className="flex w-2.5 shrink-0 justify-center"><Caret muted /></span>;
        if (id === "end") return <span key={i} className="mt-3 flex w-3 shrink-0 justify-center"><Caret /></span>;
        return <Tool key={i} id={id} />;
      })}
    </>
  );
}

const menu: [string, string, string][] = [
  ["", "F", "ile"],
  ["", "E", "dit"],
  ["F", "o", "rmat"],
  ["", "M", "odel"],
  ["", "V", "iew"],
  ["", "T", "ools"],
  ["", "H", "elp"],
];

function TopBars() {
  return (
    <>
      <header className="flex h-[23px] shrink-0 items-center bg-white pl-0.5 font-['Noto_Sans','Noto_Sans_CJK_KR',sans-serif] text-[12px] text-black">
        <svg viewBox="0 0 64 64" className="mr-[5px] size-4" aria-hidden="true">
          <StarTile />
        </svg>
        <h1>StarUML - 프로젝트uml.uml</h1>
        <div className="ml-auto flex h-full">
          {[
            ["Minimize", "M0 5.500h10"],
            ["Maximize", "M2.500 2.500V0.500h7v7h-2M0.500 2.500h7v7h-7z"],
            ["Close", "M0 0l10 10M10 0L0 10"],
          ].map(([label, d]) => (
            <button key={label} type="button" aria-label={label} className="flex w-[46px] items-center justify-center">
              <svg viewBox="0 0 10 10" className="size-2.5 overflow-visible" fill="none" stroke="#000">
                <path d={d} />
              </svg>
            </button>
          ))}
        </div>
      </header>
      <nav className="flex h-6 shrink-0 items-center pl-px">
        <Grip />
        {menu.map(([pre, key, post]) => (
          <button key={key} type="button" className="pr-[7px] pl-2">
            {pre}
            <span className="underline underline-offset-2">{key}</span>
            {post}
          </button>
        ))}
      </nav>
      <div className="flex h-[25px] shrink-0 items-center">
        <Grip />
        <Tools ids="new open save print | cut copy paste delete | undo redo find | win1 win2 win3 | code verify end" />
        <span className="w-3 shrink-0" />
        <Grip />
        <label className="relative flex h-[18px] w-[97px] items-center bg-white">
          <select aria-label="Zoom" defaultValue="100%" className="w-full appearance-none bg-transparent pl-0.5 text-[13px] leading-[18px] outline-none">
            <option>100%</option>
          </select>
          <span className="absolute right-1.5 flex"><Caret /></span>
        </label>
        <Tools ids="zoomIn zoomOut fit | refresh end" />
      </div>
      <div className="flex h-[26px] shrink-0 items-center">
        <Grip />
        {[["Font", "w-[160px]"], ["Font size", "w-[50px]"]].map(([label, width]) => (
          <label key={label} className={`relative -mr-px flex h-[21px] shrink-0 items-center border-2 border-[#a0a0a0] ${width}`}>
            <select aria-label={label} disabled className="w-full appearance-none bg-transparent" />
            <span className="absolute right-1 flex"><Caret muted /></span>
          </label>
        ))}
        <span className="w-0.5 shrink-0" />
        <Tools ids="| fontA brush fill | select stereotype v shapes mirror v | box1 box2 box3 | wrap folder hand braces plusHash guillemets end" />
        <Grip />
        <Tools ids="layout | front back | alignL alignR alignC | alignT alignB alignM | spaceH spaceV end" />
      </div>
    </>
  );
}

function PinGlyph() {
  return (
    <svg viewBox="0 0 9 11" className="h-[11px] w-[9px]" aria-hidden="true">
      <path d="M2.500 0.500h4v6h-4zM0 6.500h9M4.500 7v4M6 1v5" fill="none" stroke="#000" />
    </svg>
  );
}

function PanelTitle({ title, maximize = true }: { title: string; maximize?: boolean }) {
  return (
    <h2 className="flex h-[18px] shrink-0 items-center gap-[7px] rounded-xs border border-[#8c8c8c] px-1 pl-[3px]">
      <span className="mr-auto">{title}</span>
      {maximize && <span className="size-[7px] border border-black outline outline-black/30" />}
      <PinGlyph />
      <svg viewBox="0 0 8 8" className="size-2" aria-hidden="true">
        <path d="M0 0l8 8M8 0L0 8" stroke="#222" />
      </svg>
    </h2>
  );
}

const Y = "#ffff00";

const boxArt: Record<string, ReactNode> = {
  Select: <path d="M3.500 1v12l3-3 2 5 2-1-2-4.500h4z" fill="#fff" stroke="#000" />,
  Subsystem: (
    <g stroke="#444">
      <path d="M0.500 2.500h5v2h8v10h-13z" fill={Y} />
      <path d="M4 12v-3h6v3M7 9V6" fill="none" stroke="#000" strokeWidth="1.300" />
    </g>
  ),
  Package: <path d="M0.500 2.500h5v2h8v10h-13z" fill={Y} stroke="#444" />,
  Class: <path d="M1.500 2.500h11v12h-11zM1.500 6.500h11M1.500 10.500h11" fill={Y} stroke="#444" />,
  Interface: (
    <g stroke="#444">
      <path d="M0 8.500h6" stroke="#000" />
      <circle cx="9.500" cy="8.500" r="4" fill={Y} />
    </g>
  ),
  Enumeration: (
    <g>
      <path d="M1.500 1.500h11v13h-11zM1.500 4.500h11" fill={Y} stroke="#444" />
      <path d="M4 7.500h2M7 7.500h4M4 11.500h2M7 11.500h4" stroke="#1b7f6a" strokeWidth="1.500" />
    </g>
  ),
  Signal: (
    <g>
      <path d="M1.500 1.500h11v13h-11zM1.500 4.500h11" fill={Y} stroke="#444" />
      <path d="M6 7L4 8.500 6 10M4 8.500h5V13" fill="none" stroke="#000" />
    </g>
  ),
  Exception: (
    <g>
      <path d="M1.500 1.500h11v13h-11zM1.500 4.500h11" fill={Y} stroke="#444" />
      <path d="M5 6L3 7.500 5 9M3 7.500h5V10M8 10.500l3 3M11 10.500l-3 3" fill="none" stroke="#000" />
    </g>
  ),
  Port: (
    <g stroke="#444">
      <path d="M3.500 1.500h9v13h-9z" fill={Y} />
      <path d="M0.500 5.500h5v3h-5z" fill="#888" stroke="#000" />
    </g>
  ),
  Part: (
    <g stroke="#444">
      <path d="M1.500 1.500h11v13h-11z" fill={Y} />
      <path d="M4.500 5.500h5v6h-5z" fill="none" />
    </g>
  ),
  Association: <path d="M3 13.500h8.500V2" fill="none" stroke="#000" />,
  DirectedAssociation: <path d="M0 14.500h8.500V2M5 5l3.500-3L12 5" fill="none" stroke="#000" />,
  Aggregation: <path d="M0 14.500h8.500V7M8.500 1L6.500 4l2 3 2-3z" fill="none" stroke="#000" />,
  Composition: (
    <g stroke="#000">
      <path d="M0 14.500h8.500V7" fill="none" />
      <path d="M8.500 1L6.500 4l2 3 2-3z" />
    </g>
  ),
  Generalization: <path d="M0 14.500h8.500V6M5.500 5.500h6l-3-4z" fill="none" stroke="#000" />,
  Dependency: <path d="M0 14.500h8.500V2M5 5l3.500-3L12 5" fill="none" stroke="#000" strokeDasharray="2 1" />,
  Realization: <path d="M0 14.500h8.500V6M5.500 5.500h6l-3-4z" fill="none" stroke="#000" strokeDasharray="2 1" />,
  AssociationClass: (
    <g fill="none" stroke="#000">
      <path d="M0.500 1.500h6v6h-6z" fill={Y} />
      <path d="M0.500 3.500h6M0.500 5.500h6M6 4.500h5M0 14.500h12" />
      <path d="M10.500 4v10" strokeDasharray="1 1" />
    </g>
  ),
  Connector: (
    <g>
      <path d="M1.500 1.500h11v13h-11z" fill={Y} stroke="#444" />
      <path d="M4.500 3.500h5v3h-5zM4.500 10.500h5v3h-5zM7 6v4" fill="none" stroke="#444" />
    </g>
  ),
  Object: (
    <g stroke="#444">
      <path d="M1.500 3.500h11v9h-11z" fill={Y} />
      <path d="M4 10.500h6" stroke="#000" />
    </g>
  ),
  Link: <path d="M1.500 10v4M1 13.500h11V2M4 13.500h-3" fill="none" stroke="#000" />,
};

const raised = "border-t border-l border-r-2 border-b-2 border-t-white border-l-white border-r-[#444] border-b-[#444]";

function Toolbox() {
  return (
    <aside className="mr-[3px] flex w-[137px] shrink-0 flex-col">
      <PanelTitle title="Toolbox" maximize={false} />
      <button type="button" className={`mt-[3px] h-[17px] pl-px text-left leading-[13px] ${raised}`}>
        Annotation
      </button>
      <div className="mt-px flex h-[17px] gap-0.5">
        <button type="button" className={`flex-1 pl-px text-left leading-[13px] ${raised}`}>
          Class
        </button>
        <button type="button" aria-label="Scroll up" className={`flex w-[17px] items-center justify-center ${raised}`}>
          <span className="rotate-180"><Caret muted /></span>
        </button>
      </div>
      <ul className="mt-[2px]">
        {Object.keys(boxArt).map((name) => (
          <li key={name}>
            <button type="button" className="flex h-[22px] w-full items-center">
              <span
                className={`flex h-[19px] w-[135px] items-center gap-1 pl-1 ${
                  name === "Select" ? "border-t border-l border-[#a0a0a0] bg-white" : "border-t border-l border-transparent"
                }`}
              >
                <svg viewBox="0 0 14 16" className="h-4 w-3.5 shrink-0" aria-hidden="true">
                  {boxArt[name]}
                </svg>
                {name}
              </span>
            </button>
          </li>
        ))}
      </ul>
      <button type="button" aria-label="Scroll down" className={`mt-auto mb-[3px] ml-auto flex h-4 w-[17px] items-center justify-center ${raised}`}>
        <Caret muted />
      </button>
    </aside>
  );
}

function Chevron({ turn }: { turn: string }) {
  return (
    <svg viewBox="0 0 8 6" className={`h-1.5 w-2 shrink-0 ${turn}`} fill="none" stroke="#505050" strokeWidth="2" aria-hidden="true">
      <path d="M0.500 5L4 1.500 7.500 5" />
    </svg>
  );
}

function DiagramPane() {
  return (
    <section className="flex min-w-0 flex-1 flex-col pb-[3px]">
      <h2 className="mb-0.5 h-[18px] shrink-0 bg-[#99b3d1] pl-[3px] leading-[18px]">ClassDiagram1 (Model1)</h2>
      <div className="flex min-h-0 flex-1 flex-col border border-[#999]">
        <div className="flex h-6 shrink-0 items-end border-b-2 border-[#f0f0f0] bg-white pl-[9px]">
          <button type="button" className="flex h-[19px] items-center gap-1.5 border-r border-black bg-[#f0f0f0] pr-1 pl-0.5">
            <svg viewBox="0 0 15 16" className="h-4 w-[15px]" aria-hidden="true">
              <path d="M1 0.500h9l4 4v11H1z" fill="#fff" stroke="#000" />
              <path d="M5.500 3.500h3v2h-3zM3.500 10.500h3v2h-3zM8.500 10.500h3v2h-3z" fill={Y} stroke="#000" />
              <path d="M7 6v2M5 10V8h5v2" fill="none" stroke="#000" />
            </svg>
            ClassDiagram1
          </button>
        </div>
        <div className="flex min-h-0 flex-1">
          <DiagramCanvas />
          <div className="flex w-4 shrink-0 flex-col items-center py-1.5">
            <Chevron turn="" />
            <span className="mt-[13px] h-[140px] w-4 bg-[#cdcdcd]" />
            <span className="mt-auto flex"><Chevron turn="rotate-180" /></span>
          </div>
        </div>
        <div className="flex h-4 shrink-0 items-center pr-5 pl-1">
          <Chevron turn="-rotate-90" />
          <span className="ml-[234px] h-[15px] w-[397px] bg-[#cdcdcd]" />
          <span className="ml-auto flex"><Chevron turn="rotate-90" /></span>
        </div>
      </div>
    </section>
  );
}

const treeRows = [
  "<<interface>> GradeBackController",
  "GradeGetConditionController",
  "GradeGetDeadLineController",
  "GradeGetSampleNumController",
  "GradeGetPointController",
  "<<interface>> PointHistoryBackController",
  "PointHistoryGetPointController",
  "PointHistoryCalculateAllController",
  "PointHistoryGetHistoryController",
  "IService",
  "Jung, Yoontae",
  "Kim, Hyunsoo",
  "Kim, Jeongil",
  "Kim, Keehyun",
  "Kum, Deukkyu",
  "Lee, Jangwoo",
  "Lee, Minkyu",
  "Lim, Heejin",
  "Bae, Rankyoung1",
  "Jung, Yoontae1",
  "Kim, Hyunsoo1",
  "Kim, Jeongil1",
];

function ModelExplorer() {
  return (
    <>
      <PanelTitle title="Model Explorer" />
      <div className="flex h-7 shrink-0 items-center pl-0.5">
        <button type="button" aria-label="Sort by order" className="flex h-[22px] w-[23px] items-center justify-center border border-[#0078d7] bg-[#e5f1fb]">
          <svg viewBox="0 0 16 16" className="size-4">
            <text x="0" y="8" fontSize="8" fontWeight="700" fill="#000080" fontFamily="Liberation Mono">1</text>
            <text x="0" y="15" fontSize="8" fontWeight="700" fill="#000080" fontFamily="Liberation Mono">2</text>
            <path d="M6 3h3M6 6h3M6 10h3M6 13h3" stroke="#888" />
            <path d="M12.500 2v11M10 10l2.500 3 2.500-3" fill="none" stroke="#000" />
          </svg>
        </button>
        <button type="button" aria-label="Sort by name" className="flex h-[22px] w-[23px] items-center justify-center">
          <svg viewBox="0 0 16 16" className="size-4">
            <text x="0" y="8" fontSize="8" fontWeight="700" fill="#404080" fontFamily="Liberation Mono">A</text>
            <text x="0" y="15" fontSize="8" fontWeight="700" fill="#404080" fontFamily="Liberation Mono">B</text>
            <path d="M6 3h3M6 6h3M6 10h3M6 13h3" stroke="#888" />
            <path d="M12.500 2v11M10 10l2.500 3 2.500-3" fill="none" stroke="#000" />
          </svg>
        </button>
        <Sep />
        <button type="button" aria-label="View stereotype" className="flex h-[22px] w-8 items-center justify-center gap-1">
          <svg viewBox="0 0 16 16" className="size-4">
            <path d="M5 1l1.500 1.500L5 4M8 1l1.500 1.500L8 4M12 1l1.500 1.500L12 4M0 2v7h3" fill="none" stroke="#555" strokeDasharray="1 1" />
            <path d="M4.500 6.500h11v8h-11z" fill="#35d6f0" stroke="#333" />
            <path d="M5 12c3-3 6 1 10-2v4H5z" fill="#1c9a3c" />
            <path d="M11 8h3v2h-3z" fill="#ffee30" />
          </svg>
          <Caret />
        </button>
        <Sep />
        <button type="button" aria-label="Filter" className="flex h-[22px] w-[25px] items-center justify-center">
          <svg viewBox="0 0 16 16" className="size-4">
            <path d="M4 1l4 3-3 3-4-3z" fill="#f4e428" stroke="#333" />
            <path d="M10 5l4-4 1 3-3 3z" fill="#b81c1c" />
            <path d="M2 7h12L9 12v3.500H7V12z" fill="#b5b5b5" stroke="#444" />
          </svg>
        </button>
        <Sep />
        {["", "rotate-180"].map((turn, i) => (
          <button key={i} type="button" aria-label={i ? "Move down" : "Move up"} className="flex h-[22px] w-[23px] items-center justify-center">
            <svg viewBox="0 0 10 11" className={`h-[11px] w-2.5 ${turn}`}>
              <path d="M5 0.500L0.500 5H3v5h4V5h2.500z" fill="#18d8f0" stroke="#123" />
            </svg>
          </button>
        ))}
      </div>
      <div className="flex h-[391px] shrink-0 overflow-hidden border border-[#999] bg-white">
        <ul className="-mt-[7px] flex-1 pl-[46px]">
          {treeRows.map((row, i) => (
            <li key={row} className={`relative flex h-[18px] items-center before:absolute before:left-0 before:top-0 before:border-l before:border-dotted before:border-[#888] ${i === treeRows.length - 1 ? "before:h-[9px]" : "before:h-full"}`}>
              <span className="mr-2 w-2 border-t border-dotted border-[#888]" />
              <svg viewBox="0 0 12 12" className="mr-1 size-3 shrink-0" aria-hidden="true">
                <path d="M0 0h12v12H0z" fill="#222" />
                <path d="M0 0h11v11H0z" fill="#888" />
                <path d="M1 1h10v10H1z" fill={Y} />
                <path d="M1 4.500h10M1 7.500h10" stroke="#777" />
              </svg>
              <span className={`px-[3px] leading-[17px] whitespace-nowrap ${i === treeRows.length - 1 ? "bg-[#f0f0f0]" : ""}`}>{row}</span>
            </li>
          ))}
        </ul>
        <div className="flex w-4 shrink-0 flex-col items-center bg-[#f0f0f0] py-1.5">
          <Chevron turn="" />
          <span className="mt-auto mb-[6px] h-[67px] w-[15px] bg-[#cdcdcd]" />
          <Chevron turn="rotate-180" />
        </div>
      </div>
    </>
  );
}

function KeyGem() {
  return (
    <svg viewBox="0 0 8 8" className="size-2 shrink-0" aria-hidden="true">
      <path d="M0.500 4.500l4-4 3 2.500-4 4.500z" fill="#1b9c94" stroke="#123" />
    </svg>
  );
}

function LockGlyph() {
  return (
    <svg viewBox="0 0 8 8" className="size-2 shrink-0" aria-hidden="true">
      <path d="M0.500 3.500h7v4h-7z" fill="#1414c8" />
      <path d="M2 3.500V2c0-2 4-2 4 0v1.500" fill="none" stroke="#1414c8" />
    </svg>
  );
}

function Properties() {
  const cell = "h-[17px] border-b border-[#efefef] p-0";
  return (
    <>
      <div className="mt-1.5 flex flex-col">
        <PanelTitle title="Properties" />
      </div>
      <p className="mt-[3px] h-[18px] shrink-0 border border-[#999] pl-[3px] font-bold leading-4">(UMLClassDiagram) ClassDiagram1</p>
      <div className="mt-px flex min-h-0 flex-1 flex-col border border-[#999] bg-white">
        <div className="flex h-[17px] shrink-0 bg-[#f0f0f0]">
          <button type="button" aria-label="Collapse General" className="ml-[3px] mt-1 mr-[3px] flex size-[9px] items-center justify-center border border-black bg-white">
            <span className="h-px w-[5px] bg-black" />
          </button>
          <h3 className="flex-1 bg-[#0078d7] pl-0.5 font-bold leading-4 text-white">General</h3>
        </div>
        <table className="w-full table-fixed border-collapse border-b border-[#999]">
          <tbody>
            {[
              ["Name", "ClassDiagram1"],
              ["DiagramType", ""],
              ["DefaultDiagram", "check"],
            ].map(([name, value], i) => (
              <tr key={name}>
                <td className="w-[15px] border-r border-r-[#999] bg-[#f0f0f0] p-0" />
                <th scope="row" className={`w-[147px] border-r text-left font-normal ${cell}`}>
                  <span className="flex items-center gap-[5px] pl-[19px]">
                    {i === 1 ? <LockGlyph /> : <KeyGem />}
                    {name}
                  </span>
                </th>
                <td className={cell}>
                  {value === "check" ? (
                    <input type="checkbox" aria-label="DefaultDiagram" className="mx-auto block size-[13px] appearance-none border border-[#999] bg-white" />
                  ) : (
                    <input aria-label={name} defaultValue={value} className="block h-4 w-full bg-transparent pl-0.5 outline-none" />
                  )}
                </td>
              </tr>
            ))}
          </tbody>
        </table>
      </div>
      <div className="mt-0.5 mb-[3px] flex h-[21px] shrink-0 items-stretch bg-white text-[#808080]">
        <span className="w-1 border-t border-black" />
        <button type="button" className="flex items-center gap-[3px] border-r border-b border-black bg-[#f0f0f0] pr-1.5 pl-1 text-black">
          <svg viewBox="0 0 16 16" className="size-4">
            <path d="M0.500 4.500h11v10h-11z" fill="#fff" stroke="#000" />
            <path d="M3 8.500h1M5 8.500h5M3 10.500h1M5 10.500h5M3 12.500h1M5 12.500h5" stroke="#000" />
            <path d="M4 6l4-5h6v5H9L7 8z" fill="#ccc" stroke="#444" />
            <path d="M14 1h2v7h-2z" fill="#000080" />
          </svg>
          Properties
        </button>
        <div className="flex flex-1 items-center border-t border-black">
          <button type="button" className="flex items-center gap-1.5 border-r border-[#999] pr-1.5 pl-1.5">
            <svg viewBox="0 0 12 14" className="h-3.5 w-3">
              <path d="M0.500 0.500h7l4 4v9h-11z" fill="#fff" stroke="#333" />
              <path d="M3 5.500h5M3 7.500h6M3 9.500h6" stroke="#777" />
            </svg>
            Documentation
          </button>
          <button type="button" className="flex items-center gap-[3px] border-r border-[#999] pr-2 pl-[3px]">
            <svg viewBox="0 0 16 16" className="size-4">
              <path d="M0.500 0.500h8v10h-8z" fill={Y} stroke="#000" />
              <path d="M2 3h4v4H2z" fill="#1b9c94" />
              <path d="M4.500 6.500h11v8h-11z" fill={Y} stroke="#000" />
              <path d="M8 8l4 5M12 8l-4 5M7 10.500h6" stroke="#000080" />
              <path d="M13.500 0v5M11 2.500h5" stroke="#000" />
            </svg>
            Attachments
          </button>
        </div>
      </div>
    </>
  );
}

function StatusBar() {
  const box = "flex h-[19px] items-center border border-[#a0a0a0]";
  return (
    <div className="flex h-5 shrink-0 items-start gap-0.5 bg-[#f0f0f0] pt-px">
      <span className={`${box} w-[68px] justify-center`}>Modified</span>
      <span className={`${box} w-[98px]`} />
      <span className={`${box} flex-1 pl-[5px]`}>(UMLClassDiagram) ::Model1::ClassDiagram1</span>
    </div>
  );
}

function AppWindow() {
  return (
    <section className="flex h-full flex-1 flex-col overflow-hidden bg-[#f0f0f0] font-['DejaVu_Sans_Condensed','Noto_Sans_CJK_KR',sans-serif] text-[11px] text-[#111]">
      <TopBars />
      <main className="flex min-h-0 flex-1 px-0.5 pt-0.5">
        <Toolbox />
        <DiagramPane />
        <aside className="ml-1 flex w-[327px] shrink-0 flex-col">
          <ModelExplorer />
          <Properties />
        </aside>
      </main>
      <StatusBar />
      <footer className="flex h-10 shrink-0 items-stretch bg-linear-to-r from-[#d0e5ee] via-[#d0e5ee] to-[#d8dcec] font-['Noto_Sans_CJK_KR',sans-serif]">
        <TaskButton id="start" large={false} className="w-12" />
        <TaskButton id="search" large={false} className="mr-px w-12" />
        {pinned.map((id) => (
          <TaskButton key={id} id={id} large={false} className="mr-px w-12" />
        ))}
        <div className="ml-auto flex items-center pr-[7px]">
          <PenIcon className="mr-3.5 size-4" />
          <time className="text-center text-[13px] leading-[18px]">
            오전 10:11
            <br />
            2020-05-06
          </time>
        </div>
      </footer>
    </section>
  );
}

export default function App() {
  return (
    <div className="flex h-screen w-full overflow-hidden">
      <Desktop />
      <AppWindow />
    </div>
  );
}
